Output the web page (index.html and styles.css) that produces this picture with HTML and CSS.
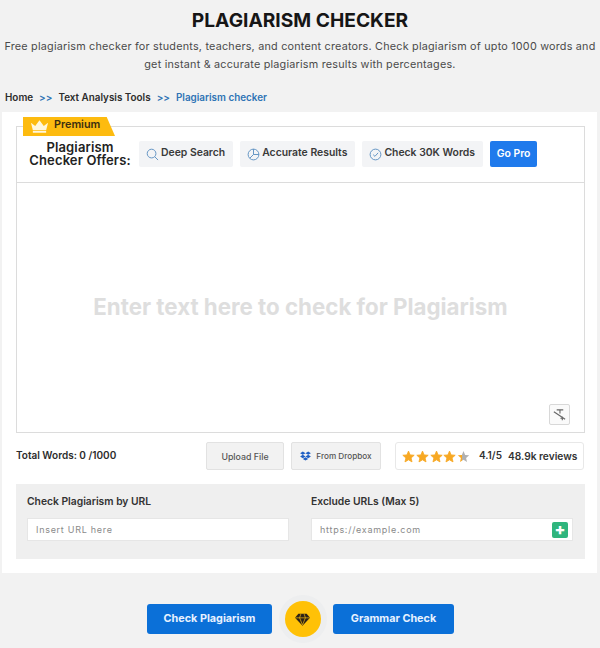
FILE: index.html
```html
<!DOCTYPE html>
<html lang="en">
<head>
<meta charset="utf-8">
<title>Plagiarism Checker</title>
<link rel="stylesheet" href="styles.css">
</head>
<body>
<header class="intro">
  <h1>PLAGIARISM CHECKER</h1>
  <p>Free plagiarism checker for students, teachers, and content creators. Check plagiarism of upto 1000 words and get instant &amp; accurate plagiarism results with percentages.</p>
</header>
<nav class="crumbs">
  <a class="crumb">Home</a><span class="sep">&gt;&gt;</span><a class="crumb">Text Analysis Tools</a><span class="sep">&gt;&gt;</span><a class="crumb current">Plagiarism checker</a>
</nav>
<main class="card">
  <section class="editor">
    <div class="ribbon">
      <svg class="crown" viewBox="0 0 20 13"><path d="M1 2.500l4.500 3.500L10 0l4.500 6L19 2.500 17 10.500H3zM3 11.300h14V13H3z" fill="#fff7dc"/></svg>
      <span class="ribbon-text">Premium</span>
    </div>
    <div class="offers">
      <div class="offers-title">Plagiarism<br>Checker Offers:</div>
      <div class="chip">
        <svg class="chip-icon" viewBox="0 0 14 14"><circle cx="6" cy="6" r="4.700"/><path d="M9.500 9.500L13 13"/></svg>Deep Search
      </div>
      <div class="chip">
        <svg class="chip-icon" viewBox="0 0 14 14"><circle cx="7" cy="7" r="5.800"/><path d="M7 1.200V7H12.800M7 7L3 11"/></svg>Accurate Results
      </div>
      <div class="chip">
        <svg class="chip-icon" viewBox="0 0 14 14"><circle cx="7" cy="7" r="5.800"/><path d="M4.500 7.200L6.400 9 9.800 5.200"/></svg>Check 30K Words
      </div>
      <div class="go-pro">Go Pro</div>
    </div>
    <div class="text-area">
      <div class="placeholder">Enter text here to check for Plagiarism</div>
      <div class="tool-btn">
        <svg viewBox="0 0 16 16"><path d="M5 3h7M8.500 3v4M2 5l12 8M9 12h4M11 10v4" fill="none" stroke="#666" stroke-width="1.200"/></svg>
      </div>
    </div>
  </section>
  <section class="meta-row">
    <div class="total">Total Words: 0 /1000</div>
    <div class="file-btn upload">Upload File</div>
    <div class="file-btn dropbox">
      <svg viewBox="0 0 14 13"><path d="M3.500 0.500L7 2.800 3.500 5 0 2.800zM10.500 0.500L14 2.800 10.500 5 7 2.800zM3.500 5L7 7.300 3.500 9.500 0 7.300zM10.500 5L14 7.300 10.500 9.500 7 7.300zM3.500 10.300L7 8 10.500 10.300 7 12.500z" fill="#1f5fc4"/></svg>
      From Dropbox
    </div>
    <div class="rating">
      <div class="stars">
        <svg class="star" viewBox="0 0 24 24"><path d="M12 2l3 7 7.500.7-5.700 5 1.700 7.300L12 18.200 5.500 22l1.700-7.300-5.700-5L9 9z"/></svg>
        <svg class="star" viewBox="0 0 24 24"><path d="M12 2l3 7 7.500.7-5.700 5 1.700 7.300L12 18.200 5.500 22l1.700-7.300-5.700-5L9 9z"/></svg>
        <svg class="star" viewBox="0 0 24 24"><path d="M12 2l3 7 7.500.7-5.700 5 1.700 7.300L12 18.200 5.500 22l1.700-7.300-5.700-5L9 9z"/></svg>
        <svg class="star" viewBox="0 0 24 24"><path d="M12 2l3 7 7.500.7-5.700 5 1.700 7.300L12 18.200 5.500 22l1.700-7.300-5.700-5L9 9z"/></svg>
        <svg class="star" viewBox="0 0 24 24"><defs><linearGradient id="part"><stop offset="0.350" stop-color="#f7a823"/><stop offset="0.350" stop-color="#b0b0b0"/></linearGradient></defs><path class="part" d="M12 2l3 7 7.500.7-5.700 5 1.700 7.300L12 18.200 5.500 22l1.700-7.300-5.700-5L9 9z"/></svg>
      </div>
      <span class="score">4.1/5</span>
      <span class="reviews">48.9k reviews</span>
    </div>
  </section>
  <section class="url-panel">
    <div class="url-field">
      <label class="url-label">Check Plagiarism by URL</label>
      <div class="url-input">Insert URL here</div>
    </div>
    <div class="url-field">
      <label class="url-label">Exclude URLs (Max 5)</label>
      <div class="url-input">https://example.com<span class="plus">+</span></div>
    </div>
  </section>
</main>
<footer class="actions">
  <div class="action">Check Plagiarism</div>
  <div class="gem-halo">
    <div class="gem">
      <svg viewBox="0 0 18 15"><path d="M4 0.500H14L18 5.500 9 15 0 5.500z" fill="#2b2118"/><path d="M0.500 5.500H17.500M5.500 5.500L9 14 12.500 5.500M5.500 5.500L7 1M12.500 5.500L11 1" fill="none" stroke="#ffc107" stroke-width="0.800"/></svg>
    </div>
  </div>
  <div class="action">Grammar Check</div>
</footer>
</body>
</html>
```

FILE: styles.css
```css
* { box-sizing: border-box; }
html, body { margin: 0; padding: 0; }
body {
  width: 600px;
  height: 648px;
  overflow: hidden;
  background: #f2f2f2;
  font-family: "Inter", "Liberation Sans", sans-serif;
  color: #222;
}
.intro { text-align: center; padding-top: 9px; }
.intro h1 {
  margin: 0;
  font-size: 19.200px;
  line-height: 22px;
  font-weight: 700;
  color: #161616;
}
.intro p {
  margin: 7px 0 0;
  font-size: 10.800px;
  line-height: 18px;
  color: #4a4a4a;
  letter-spacing: 0.020em;
}
.crumbs {
  display: flex;
  align-items: center;
  height: 18px;
  margin-top: 14px;
  padding-left: 5px;
  font-size: 9.900px;
  font-weight: 600;
}
.crumb { color: #2c2c2c; }
.crumb.current { color: #2f74b5; }
.sep { color: #2f74b5; margin: 0 6px; }
.card {
  width: 595px;
  height: 461px;
  margin: 6px 0 0 2px;
  background: #fff;
  padding: 14px 12px 0 14px;
}
.editor {
  position: relative;
  height: 307px;
  border: 1px solid #dcdcdc;
  display: flex;
  flex-direction: column;
}
.ribbon {
  position: absolute;
  left: 6px;
  top: -10px;
  width: 92px;
  height: 19px;
  display: flex;
  align-items: center;
  gap: 5px;
  padding-left: 7px;
  background: #fdbb0f;
  clip-path: polygon(0 0, 91% 0, 100% 100%, 0 100%);
  font-size: 10.800px;
  font-weight: 600;
  color: #3a2e10;
}
.ribbon-text { padding-bottom: 4px; }
.crown { width: 19px; height: 13px; }
.offers {
  height: 56px;
  flex: none;
  border-bottom: 1px solid #dcdcdc;
  display: flex;
  align-items: center;
  padding: 0 0 1px 11px;
}
.offers-title {
  width: 104px;
  text-align: center;
  font-size: 13px;
  line-height: 13px;
  font-weight: 600;
  color: #222;
  letter-spacing: 0.010em;
}
.chip {
  display: flex;
  align-items: center;
  gap: 2px;
  height: 26px;
  padding: 0 8px 3px 7px;
  margin-left: 7px;
  background: #f3f4f6;
  border-radius: 2px;
  font-size: 10.400px;
  font-weight: 600;
  color: #3a3a3a;
  white-space: nowrap;
}
.chip-icon {
  width: 13px;
  height: 13px;
  margin-top: 4px;
  flex: none;
  fill: none;
  stroke: #5b8fc0;
  stroke-width: 1;
}
.go-pro {
  margin-left: 7px;
  width: 47px;
  height: 26px;
  padding-bottom: 2px;
  display: flex;
  align-items: center;
  justify-content: center;
  background: #1f7aec;
  border-radius: 2px;
  color: #fff;
  font-size: 10.400px;
  font-weight: 600;
}
.text-area {
  position: relative;
  flex: 1;
  display: flex;
  align-items: center;
  justify-content: center;
}
.placeholder {
  font-size: 22.300px;
  font-weight: 700;
  color: #dedede;
  padding-bottom: 2px;
}
.tool-btn {
  position: absolute;
  right: 14px;
  bottom: 7px;
  width: 21px;
  height: 21px;
  border: 1px solid #d8d8d8;
  border-radius: 2px;
  background: #fafafa;
  display: flex;
  align-items: center;
  justify-content: center;
}
.tool-btn svg { width: 15px; height: 15px; }
.meta-row {
  display: flex;
  align-items: center;
  height: 28px;
  margin-top: 9px;
}
.total {
  width: 190px;
  padding-bottom: 2px;
  font-size: 10px;
  font-weight: 600;
  color: #2c2c2c;
}
.file-btn {
  height: 28px;
  display: flex;
  align-items: center;
  justify-content: center;
  background: #f2f2f2;
  border: 1px solid #e2e2e2;
  border-radius: 2px;
  color: #555;
  font-size: 8.800px;
  font-weight: 500;
}
.upload { width: 78px; }
.dropbox { width: 90px; margin-left: 7px; gap: 5px; font-size: 8.200px; }
.dropbox svg { width: 11px; height: 10px; }
.rating {
  width: 189px;
  height: 28px;
  margin-left: 14px;
  display: flex;
  align-items: center;
  border: 1px solid #e8e8e8;
  border-radius: 3px;
  padding-left: 6px;
}
.stars { display: flex; width: 70px; gap: 0.800px; }
.star { width: 13px; height: 13px; fill: #f7a823; stroke: #f7a823; stroke-width: 1.500; stroke-linejoin: round; }
.star .part { fill: url(#part); stroke: none; }
.score { font-size: 10px; font-weight: 600; margin: 0 6px 0 7px; padding-bottom: 3px; color: #333; }
.reviews { font-size: 10.200px; font-weight: 600; color: #333; white-space: nowrap; padding-bottom: 1px; }
.url-panel {
  margin-top: 14px;
  height: 75px;
  background: #efefef;
  display: flex;
  gap: 22px;
  padding: 11px 11px 0;
}
.url-field { width: 262px; display: flex; flex-direction: column; }
.url-label {
  height: 13px;
  line-height: 13px;
  font-size: 10.300px;
  font-weight: 600;
  color: #333;
}
.url-input {
  position: relative;
  margin-top: 10px;
  height: 23px;
  background: #fff;
  border: 1px solid #e6e6e6;
  padding-left: 8px;
  display: flex;
  align-items: center;
  font-size: 9px;
  color: #8a8a8a;
  letter-spacing: 0.080em;
}
.plus {
  position: absolute;
  right: 4px;
  top: 3px;
  width: 16px;
  height: 16px;
  border-radius: 2px;
  background: #2fb57d;
  color: #fff;
  font-size: 16px;
  line-height: 15px;
  font-weight: 800;
  text-align: center;
  letter-spacing: 0;
}
.actions {
  display: flex;
  align-items: center;
  justify-content: center;
  padding-left: 1px;
  margin-top: 18px;
  height: 56px;
}
.action {
  height: 30px;
  padding-bottom: 2px;
  display: flex;
  align-items: center;
  justify-content: center;
  background: #0b70d8;
  border-radius: 3px;
  color: #e8f2ff;
  font-size: 10.800px;
  font-weight: 700;
}
.action:first-child { width: 125px; }
.action:last-child { width: 121px; }
.gem-halo {
  width: 61px;
  height: 56px;
  display: flex;
  align-items: center;
  justify-content: center;
}
.gem {
  width: 36px;
  height: 36px;
  border-radius: 50%;
  background: #ffc107;
  box-shadow: 0 0 0 6px #edeeef;
  display: flex;
  align-items: center;
  justify-content: center;
}
.gem svg { width: 15px; height: 13px; }
```
